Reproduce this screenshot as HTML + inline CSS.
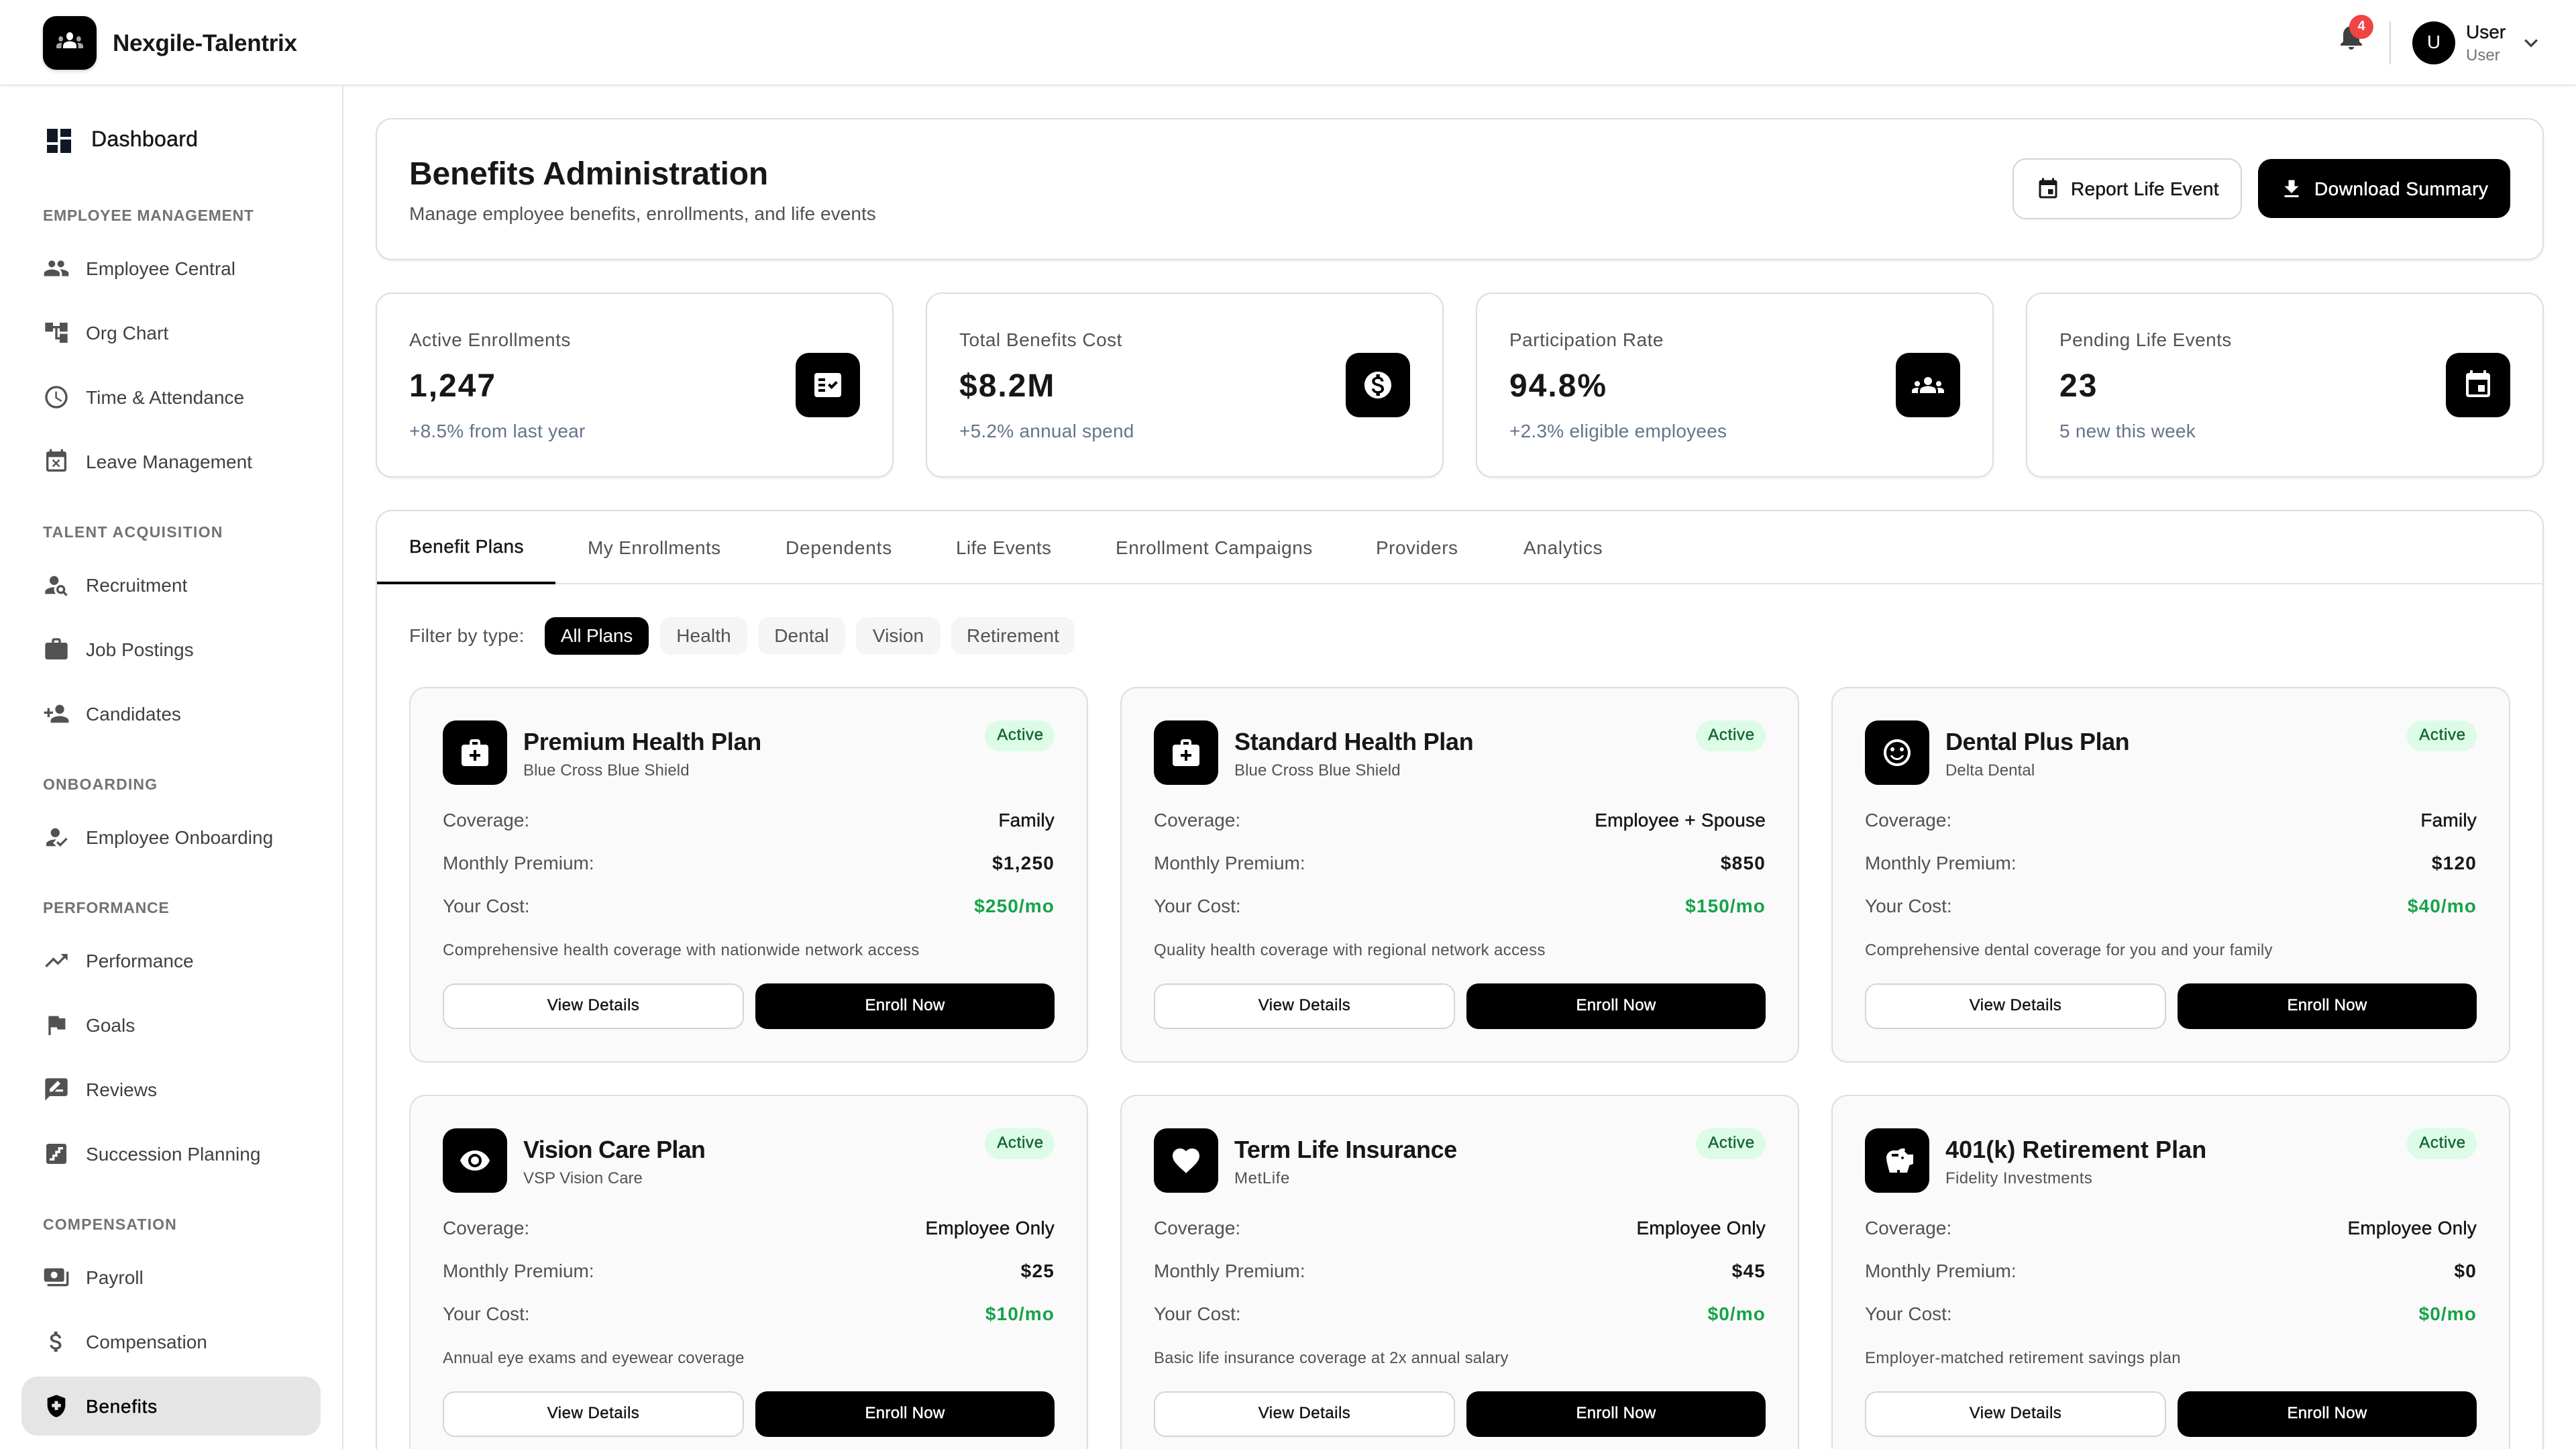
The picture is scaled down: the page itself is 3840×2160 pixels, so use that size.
<!DOCTYPE html>
<html lang="en"><head><meta charset="utf-8"><title>Benefits Administration</title>
<style>
*{box-sizing:border-box;margin:0;padding:0}
html,body{width:3840px;height:2160px;overflow:hidden;background:#fff;font-family:"Liberation Sans",sans-serif;color:#171717}
#root{position:relative;width:3840px;height:2160px;overflow:hidden;background:#fff}
.a,.t,.i{position:absolute}
.t{white-space:nowrap;line-height:40px;height:40px}
.i{fill:currentColor;display:block}
.m{-webkit-text-stroke:.45px currentColor}
.nav{font-size:28px;color:#404040;left:128px;letter-spacing:.03px;margin-top:2px}
.ni{width:40px;height:40px;left:64px;color:#525252}
.sec{font-size:23px;font-weight:700;color:#737373;left:64px}
.card{position:absolute;background:#fff;border:2px solid #dedede;border-radius:24px;box-shadow:0 2px 4px rgba(0,0,0,.05)}
.stat{top:436px;width:772px;height:276px}
.stat .t{left:48px}
.sl{font-size:28px;color:#525252;top:49px;letter-spacing:.5px}
.sv{font-size:48px;font-weight:700;top:118px;height:40px;letter-spacing:2px}
.ss{font-size:28px;color:#64748b;top:185px;letter-spacing:.25px}
.tile{position:absolute;width:96px;height:96px;border-radius:20px;background:#000;color:#fff}
.tile svg{position:absolute;left:24px;top:24px;width:48px;height:48px;fill:#fff}
.tab{font-size:28px;color:#525252;top:797px}
.chip{position:absolute;top:920px;height:56px;border-radius:16px;background:#f5f5f5;color:#525252;font-size:28px;line-height:56px;text-align:center;letter-spacing:.1px}
.plan{width:1012px;height:560px;background:#fafafa;box-shadow:none}
.plan .t{left:168px}
.pn{font-size:36px;font-weight:700;top:60px;letter-spacing:-.3px}
.pp{font-size:24px;color:#525252;top:103px;letter-spacing:.1px}
.bd{position:absolute;left:856px;top:48px;width:104px;height:46px;border-radius:23px;background:#dcfce7;color:#166534;font-size:24px;line-height:44px;text-align:center;letter-spacing:.7px;padding-left:2px}
.plan .r{left:48px;font-size:28px;color:#525252}
.plan .v{left:auto;right:48px;font-size:28px;letter-spacing:.2px}
.r1{top:177px}.r2{top:241px}.r3{top:305px}
.plan .b{font-weight:700;letter-spacing:1.2px}
.plan .g{font-weight:700;color:#16a34a;letter-spacing:1.1px}
.plan .d{left:48px;font-size:24px;color:#525252;top:371px;letter-spacing:.37px}
.vb,.eb{position:absolute;top:440px;height:68px;border-radius:18px;font-size:24px;text-align:center;letter-spacing:.5px}
.vb{left:48px;width:449px;background:#fff;border:2px solid #d4d4d4;line-height:62px;color:#171717}
.eb{left:514px;width:446px;background:#000;color:#fff;line-height:66px;letter-spacing:.3px}
</style></head>
<body>
<svg width="0" height="0" style="position:absolute"><defs>
<symbol id="dash" viewBox="0 0 24 24"><path d="M3 13h8V3H3v10zm0 8h8v-6H3v6zm10 0h8V11h-8v10zm0-18v6h8V3h-8z"/></symbol>
<symbol id="people" viewBox="0 0 24 24"><path d="M16 11c1.66 0 2.99-1.34 2.99-3S17.66 5 16 5c-1.66 0-3 1.34-3 3s1.34 3 3 3zm-8 0c1.66 0 2.99-1.34 2.99-3S9.66 5 8 5C6.34 5 5 6.34 5 8s1.34 3 3 3zm0 2c-2.33 0-7 1.17-7 3.5V19h14v-2.5c0-2.33-4.67-3.5-7-3.5zm8 0c-.29 0-.62.02-.97.05 1.16.84 1.97 1.97 1.97 3.45V19h6v-2.5c0-2.33-4.67-3.5-7-3.5z"/></symbol>
<symbol id="tree" viewBox="0 0 24 24"><path d="M22 11V3h-7v3H9V3H2v8h7V8h2v10h4v3h7v-8h-7v3h-2V8h2v3z"/></symbol>
<symbol id="clock" viewBox="0 0 24 24"><path d="M11.99 2C6.47 2 2 6.48 2 12s4.47 10 9.99 10C17.52 22 22 17.52 22 12S17.52 2 11.99 2zM12 20c-4.42 0-8-3.58-8-8s3.58-8 8-8 8 3.58 8 8-3.58 8-8 8zm.5-13H11v6l5.25 3.15.75-1.23-4.5-2.67z"/></symbol>
<symbol id="busy" viewBox="0 0 24 24"><path d="M9.31 17l2.44-2.44L14.19 17l1.06-1.06-2.44-2.44 2.44-2.44L14.19 10l-2.44 2.44L9.31 10l-1.06 1.06 2.44 2.44-2.44 2.44L9.31 17zM19 3h-1V1h-2v2H8V1H6v2H5c-1.11 0-1.99.9-1.99 2L3 19c0 1.1.89 2 2 2h14c1.1 0 2-.9 2-2V5c0-1.1-.9-2-2-2zm0 16H5V8h14v11z"/></symbol>
<symbol id="psearch" viewBox="0 0 24 24"><circle cx="10" cy="8" r="4"/><path d="M10.35 14.01C7.62 13.91 2 15.27 2 18v2h9.54c-2.47-2.76-1.23-5.89-1.19-5.99zM19.43 18.02c.36-.59.57-1.28.57-2.02 0-2.21-1.79-4-4-4s-4 1.79-4 4 1.79 4 4 4c.74 0 1.43-.22 2.02-.57L20.59 22 22 20.59c-1.5-1.5-.79-.8-2.57-2.57zM16 18c-1.1 0-2-.9-2-2s.9-2 2-2 2 .9 2 2-.9 2-2 2z"/></symbol>
<symbol id="work" viewBox="0 0 24 24"><path d="M20 6h-4V4c0-1.11-.89-2-2-2h-4c-1.11 0-2 .89-2 2v2H4c-1.11 0-1.99.89-1.99 2L2 19c0 1.11.89 2 2 2h16c1.11 0 2-.89 2-2V8c0-1.11-.89-2-2-2zm-6 0h-4V4h4v2z"/></symbol>
<symbol id="padd" viewBox="0 0 24 24"><path d="M15 12c2.21 0 4-1.79 4-4s-1.79-4-4-4-4 1.79-4 4 1.79 4 4 4zm-9-2V7H4v3H1v2h3v3h2v-3h3v-2H6zm9 4c-2.67 0-8 1.34-8 4v2h16v-2c0-2.66-5.33-4-8-4z"/></symbol>
<symbol id="reg" viewBox="0 0 24 24"><path d="M9 17l3-2.94c-.39-.04-.68-.06-1-.06-2.67 0-8 1.34-8 4v2h9l-3-3zm2-5c2.21 0 4-1.79 4-4s-1.79-4-4-4-4 1.79-4 4 1.79 4 4 4zm4.47 8.5L12 17l1.4-1.41 2.07 2.08 5.13-5.17 1.4 1.41z"/></symbol>
<symbol id="trend" viewBox="0 0 24 24"><path d="M16 6l2.29 2.29-4.88 4.88-4-4L2 16.59 3.41 18l6-6 4 4 6.3-6.29L22 12V6z"/></symbol>
<symbol id="flag" viewBox="0 0 24 24"><path d="M14.4 6L14 4H5v17h2v-7h5.6l.4 2h7V6z"/></symbol>
<symbol id="review" viewBox="0 0 24 24"><path d="M20 2H4c-1.1 0-1.99.9-1.99 2L2 22l4-4h14c1.1 0 2-.9 2-2V4c0-1.1-.9-2-2-2zM6 14v-2.47l6.88-6.88c.2-.2.51-.2.71 0l1.77 1.77c.2.2.2.51 0 .71L8.47 14H6zm12 0h-7.5l2-2H18v2z"/></symbol>
<symbol id="stairs" viewBox="0 0 24 24"><path d="M19 3H5c-1.1 0-2 .9-2 2v14c0 1.1.9 2 2 2h14c1.1 0 2-.9 2-2V5c0-1.1-.9-2-2-2zm-1 5h-2.42v3.33H13v3.33h-2.58V18H6v-2h2.42v-3.33H11V9.33h2.58V6H18v2z"/></symbol>
<symbol id="pay" viewBox="0 0 24 24"><path d="M19 14V6c0-1.1-.9-2-2-2H3c-1.1 0-2 .9-2 2v8c0 1.1.9 2 2 2h14c1.1 0 2-.9 2-2zm-9-1c-1.66 0-3-1.34-3-3s1.34-3 3-3 3 1.34 3 3-1.34 3-3 3zm13-6v11c0 1.1-.9 2-2 2H4v-2h17V7h2z"/></symbol>
<symbol id="money" viewBox="0 0 24 24"><path d="M11.8 10.9c-2.27-.59-3-1.2-3-2.15 0-1.09 1.01-1.85 2.7-1.85 1.78 0 2.44.85 2.5 2.1h2.21c-.07-1.72-1.12-3.3-3.21-3.81V3h-3v2.16c-1.94.42-3.5 1.68-3.5 3.61 0 2.31 1.91 3.46 4.7 4.13 2.5.6 3 1.48 3 2.41 0 .69-.49 1.79-2.7 1.79-2.06 0-2.87-.92-2.98-2.1h-2.2c.12 2.19 1.76 3.42 3.68 3.83V21h3v-2.15c1.95-.37 3.5-1.5 3.5-3.55 0-2.84-2.43-3.81-4.7-4.4z"/></symbol>
<symbol id="shield" viewBox="0 0 24 24"><path fill-rule="evenodd" d="M10.5 13H8v-3h2.5V7.5h3V10H16v3h-2.5v2.5h-3V13zM12 2 4 5v6.09c0 5.05 3.41 9.76 8 10.91 4.59-1.15 8-5.86 8-10.91V5l-8-3z"/></symbol>
<symbol id="event" viewBox="0 0 24 24"><path d="M17 12h-5v5h5v-5zM16 1v2H8V1H6v2H5c-1.11 0-1.99.9-1.99 2L3 19c0 1.1.89 2 2 2h14c1.1 0 2-.9 2-2V5c0-1.1-.9-2-2-2h-1V1h-2zm3 18H5V8h14v11z"/></symbol>
<symbol id="dl" viewBox="0 0 24 24"><path d="M19 9h-4V3H9v6H5l7 7 7-7zM5 18v2h14v-2H5z"/></symbol>
<symbol id="groups" viewBox="0 0 24 24"><path d="M12 12.75c1.63 0 3.07.39 4.24.9 1.08.48 1.76 1.56 1.76 2.73V18H6v-1.61c0-1.18.68-2.26 1.76-2.73 1.17-.52 2.61-.91 4.24-.91zM4 13c1.1 0 2-.9 2-2s-.9-2-2-2-2 .9-2 2 .9 2 2 2zm1.13 1.1c-.37-.06-.74-.1-1.13-.1-.99 0-1.93.21-2.78.58C.48 14.9 0 15.62 0 16.43V18h4.5v-1.61c0-.83.23-1.61.63-2.29zM20 13c1.1 0 2-.9 2-2s-.9-2-2-2-2 .9-2 2 .9 2 2 2zm4 3.43c0-.81-.48-1.53-1.22-1.85-.85-.37-1.79-.58-2.78-.58-.39 0-.76.04-1.13.1.4.68.63 1.46.63 2.29V18H24v-1.57zM12 6c1.66 0 3 1.34 3 3s-1.34 3-3 3-3-1.34-3-3 1.34-3 3-3z"/></symbol>
<symbol id="check" viewBox="0 0 24 24"><path fill-rule="evenodd" d="M20 3H4c-1.1 0-2 .9-2 2v14c0 1.1.9 2 2 2h16c1.1 0 2-.9 2-2V5c0-1.1-.9-2-2-2zM10 17H5v-2h5v2zm0-4H5v-2h5v2zm0-4H5V7h5v2zm4.82 6L12 12.16l1.41-1.41 1.41 1.42L17.99 9l1.42 1.42L14.82 15z"/></symbol>
<symbol id="coin" viewBox="0 0 24 24"><path fill-rule="evenodd" d="M12 2C6.48 2 2 6.48 2 12s4.48 10 10 10 10-4.48 10-10S17.52 2 12 2zm1.41 16.09V20h-2.67v-1.93c-1.71-.36-3.16-1.46-3.27-3.4h1.96c.1 1.05.82 1.87 2.65 1.87 1.96 0 2.4-.98 2.4-1.59 0-.83-.44-1.61-2.67-2.14-2.48-.6-4.18-1.62-4.18-3.67 0-1.72 1.39-2.84 3.11-3.21V4h2.67v1.95c1.86.45 2.79 1.86 2.85 3.39H14.3c-.05-1.11-.64-1.87-2.22-1.87-1.5 0-2.4.68-2.4 1.64 0 .84.65 1.39 2.67 1.91s4.18 1.39 4.18 3.91c-.01 1.83-1.38 2.83-3.12 3.16z"/></symbol>
<symbol id="med" viewBox="0 0 24 24"><path fill-rule="evenodd" d="M20 6h-4V4c0-1.1-.9-2-2-2h-4c-1.1 0-2 .9-2 2v2H4c-1.1 0-2 .9-2 2v12c0 1.1.9 2 2 2h16c1.1 0 2-.9 2-2V8c0-1.1-.9-2-2-2zM10 4h4v2h-4V4zm6 11h-3v3h-2v-3H8v-2h3v-3h2v3h3v2z"/></symbol>
<symbol id="smile" viewBox="0 0 24 24"><circle cx="15.5" cy="9.5" r="1.5"/><circle cx="8.5" cy="9.5" r="1.5"/><path d="M12 16c-1.48 0-2.75-.81-3.45-2H6.88c.8 2.05 2.79 3.5 5.12 3.5s4.32-1.45 5.12-3.5h-1.67c-.7 1.19-1.97 2-3.45 2zm-.01-14C6.47 2 2 6.48 2 12s4.47 10 9.99 10C17.52 22 22 17.52 22 12S17.52 2 11.99 2zM12 20c-4.42 0-8-3.58-8-8s3.58-8 8-8 8 3.58 8 8-3.58 8-8 8z"/></symbol>
<symbol id="eye" viewBox="0 0 24 24"><path d="M12 4.5C7 4.5 2.73 7.61 1 12c1.73 4.39 6 7.5 11 7.5s9.27-3.11 11-7.5c-1.73-4.39-6-7.5-11-7.5zM12 17c-2.76 0-5-2.24-5-5s2.24-5 5-5 5 2.24 5 5-2.24 5-5 5zm0-8c-1.66 0-3 1.34-3 3s1.34 3 3 3 3-1.34 3-3-1.34-3-3-3z"/></symbol>
<symbol id="heart" viewBox="0 0 24 24"><path d="M12 21.35l-1.45-1.32C5.4 15.36 2 12.28 2 8.5 2 5.42 4.42 3 7.5 3c1.74 0 3.41.81 4.5 2.09C13.09 3.81 14.76 3 16.5 3 19.58 3 22 5.42 22 8.5c0 3.78-3.4 6.86-8.55 11.54L12 21.35z"/></symbol>
<symbol id="pig" viewBox="0 0 24 24"><path fill-rule="evenodd" d="M19.83 7.5l-2.27-2.27c.07-.42.18-.81.32-1.15.11-.26.04-.56-.16-.76-.36-.36-1-.32-1.49-.32-1.31 0-2.59.55-3.49 1.5H9.5C6.46 4.5 4 6.96 4 10c0 3.04 2.5 11 2.5 11H12v-2h2v2h5.5l1.68-5.59 2.82-.94V7.5h-2.17zM13 9H8V7h5v2zm3 2c-.55 0-1-.45-1-1s.45-1 1-1 1 .45 1 1-.45 1-1 1z"/></symbol>
</defs></svg>

<div id="root">
<!-- top header -->
<div class="a" style="left:0;top:0;width:3840px;height:128px;background:#fff;border-bottom:2px solid #e5e5e5;box-shadow:0 2px 4px rgba(0,0,0,.03)"></div>
<div class="a" style="left:64px;top:24px;width:80px;height:80px;border-radius:20px;background:#000;box-shadow:0 2px 6px rgba(0,0,0,.18)"></div>
<svg class="i" style="left:84px;top:36px;width:40px;height:48px;fill:#fff" viewBox="0 0 24 24" preserveAspectRatio="none"><path opacity=".65" d="M4 13c1.1 0 2-.9 2-2s-.9-2-2-2-2 .9-2 2 .9 2 2 2zm1.13 1.1c-.37-.06-.74-.1-1.13-.1-.99 0-1.93.21-2.78.58C.48 14.9 0 15.62 0 16.43V18h4.5v-1.61c0-.83.23-1.61.63-2.29zM20 13c1.1 0 2-.9 2-2s-.9-2-2-2-2 .9-2 2 .9 2 2 2zm4 3.43c0-.81-.48-1.53-1.22-1.85-.85-.37-1.79-.58-2.78-.58-.39 0-.76.04-1.13.1.4.68.63 1.46.63 2.29V18H24v-1.57z"/><path d="M12 12.75c1.63 0 3.07.39 4.24.9 1.08.48 1.76 1.56 1.76 2.73V18H6v-1.61c0-1.18.68-2.26 1.76-2.73 1.17-.52 2.61-.91 4.24-.91zM12 6c1.66 0 3 1.34 3 3s-1.34 3-3 3-3-1.34-3-3 1.34-3 3-3z"/></svg>
<div class="t" style="left:168px;top:45px;font-size:35px;font-weight:700;letter-spacing:-.28px">Nexgile-Talentrix</div>

<svg class="i" style="left:3481px;top:30px;width:48px;height:48px;color:#404040" viewBox="0 0 24 24"><path d="M12 22c1.1 0 2-.9 2-2h-4c0 1.1.89 2 2 2zm6-6v-5c0-3.07-1.64-5.64-4.5-6.32V4c0-.83-.67-1.5-1.5-1.5s-1.5.67-1.5 1.5v.68C7.63 5.36 6 7.92 6 11v5l-2 2v1h16v-1l-2-2z"/></svg>
<div class="a" style="left:3502px;top:22px;width:36px;height:36px;border-radius:50%;background:#ef4444;color:#fff;font-size:20px;font-weight:700;line-height:34px;text-align:center">4</div>
<div class="a" style="left:3562px;top:32px;width:2px;height:64px;background:#d4d4d4"></div>
<div class="a" style="left:3596px;top:32px;width:64px;height:64px;border-radius:50%;background:#000;color:#fff;font-size:28px;line-height:62px;text-align:center">U</div>
<div class="t m" style="left:3676px;top:28px;font-size:28px">User</div>
<div class="t" style="left:3676px;top:63px;font-size:24px;color:#737373">User</div>
<svg class="i" style="left:3753px;top:44px;width:40px;height:40px;color:#404040" viewBox="0 0 24 24"><path d="M16.59 8.59L12 13.17 7.41 8.59 6 10l6 6 6-6z"/></svg>

<!-- sidebar -->
<div class="a" style="left:510px;top:128px;width:2px;height:2032px;background:#e5e5e5"></div>
<svg class="i" style="left:64px;top:186px;width:48px;height:48px;color:#101828"><use href="#dash"/></svg>
<div class="t m" style="left:136px;top:187px;font-size:32px;letter-spacing:.3px">Dashboard</div>

<div class="t sec" style="top:301px;letter-spacing:.68px">EMPLOYEE MANAGEMENT</div>
<svg class="i ni" style="top:380px"><use href="#people"/></svg><div class="t nav" style="top:379px">Employee Central</div>
<svg class="i ni" style="top:476px"><use href="#tree"/></svg><div class="t nav" style="top:475px">Org Chart</div>
<svg class="i ni" style="top:572px"><use href="#clock"/></svg><div class="t nav" style="top:571px">Time &amp; Attendance</div>
<svg class="i ni" style="top:668px"><use href="#busy"/></svg><div class="t nav" style="top:667px">Leave Management</div>

<div class="t sec" style="top:773px;letter-spacing:1.3px">TALENT ACQUISITION</div>
<svg class="i ni" style="top:852px"><use href="#psearch"/></svg><div class="t nav" style="top:851px">Recruitment</div>
<svg class="i ni" style="top:948px"><use href="#work"/></svg><div class="t nav" style="top:947px">Job Postings</div>
<svg class="i ni" style="top:1044px"><use href="#padd"/></svg><div class="t nav" style="top:1043px">Candidates</div>

<div class="t sec" style="top:1149px;letter-spacing:1.15px">ONBOARDING</div>
<svg class="i ni" style="top:1228px"><use href="#reg"/></svg><div class="t nav" style="top:1227px">Employee Onboarding</div>

<div class="t sec" style="top:1333px;letter-spacing:.75px">PERFORMANCE</div>
<svg class="i ni" style="top:1412px"><use href="#trend"/></svg><div class="t nav" style="top:1411px">Performance</div>
<svg class="i ni" style="top:1508px"><use href="#flag"/></svg><div class="t nav" style="top:1507px">Goals</div>
<svg class="i ni" style="top:1604px"><use href="#review"/></svg><div class="t nav" style="top:1603px">Reviews</div>
<svg class="i ni" style="top:1700px"><use href="#stairs"/></svg><div class="t nav" style="top:1699px">Succession Planning</div>

<div class="t sec" style="top:1805px;letter-spacing:1.15px">COMPENSATION</div>
<svg class="i ni" style="top:1884px"><use href="#pay"/></svg><div class="t nav" style="top:1883px">Payroll</div>
<svg class="i ni" style="top:1980px"><use href="#money"/></svg><div class="t nav" style="top:1979px">Compensation</div>
<div class="a" style="left:32px;top:2052px;width:446px;height:88px;border-radius:24px;background:#e5e5e5"></div>
<svg class="i ni" style="top:2076px;color:#000"><use href="#shield"/></svg><div class="t nav m" style="top:2075px;color:#000;letter-spacing:.7px">Benefits</div>

<!-- page header card -->
<div class="card" style="left:560px;top:176px;width:3232px;height:212px"></div>
<div class="t" style="left:610px;top:240px;font-size:48px;font-weight:700;letter-spacing:-.2px">Benefits Administration</div>
<div class="t" style="left:610px;top:299px;font-size:28px;color:#525252;letter-spacing:.06px">Manage employee benefits, enrollments, and life events</div>
<div class="a" style="left:3000px;top:236px;width:342px;height:91px;border:2px solid #d4d4d4;border-radius:20px;background:#fff"></div>
<svg class="i" style="left:3035px;top:264px;width:36px;height:36px"><use href="#event"/></svg>
<div class="t m" style="left:3087px;top:262px;font-size:28px;letter-spacing:.26px">Report Life Event</div>
<div class="a" style="left:3366px;top:237px;width:376px;height:88px;border-radius:20px;background:#000"></div>
<svg class="i" style="left:3398px;top:264px;width:36px;height:36px;color:#fff"><use href="#dl"/></svg>
<div class="t m" style="left:3450px;top:262px;font-size:28px;color:#fff;letter-spacing:.45px">Download Summary</div>

<!-- stat cards -->
<div class="card stat" style="left:560px">
  <div class="t sl">Active Enrollments</div><div class="t sv">1,247</div><div class="t ss">+8.5% from last year</div>
  <div class="tile" style="left:624px;top:88px"><svg><use href="#check"/></svg></div>
</div>
<div class="card stat" style="left:1380px">
  <div class="t sl">Total Benefits Cost</div><div class="t sv">$8.2M</div><div class="t ss">+5.2% annual spend</div>
  <div class="tile" style="left:624px;top:88px"><svg><use href="#coin"/></svg></div>
</div>
<div class="card stat" style="left:2200px">
  <div class="t sl">Participation Rate</div><div class="t sv">94.8%</div><div class="t ss">+2.3% eligible employees</div>
  <div class="tile" style="left:624px;top:88px"><svg><use href="#groups"/></svg></div>
</div>
<div class="card stat" style="left:3020px">
  <div class="t sl" style="letter-spacing:.4px">Pending Life Events</div><div class="t sv">23</div><div class="t ss">5 new this week</div>
  <div class="tile" style="left:624px;top:88px"><svg><use href="#event"/></svg></div>
</div>

<!-- tab container -->
<div class="card" style="left:560px;top:760px;width:3232px;height:1500px"></div>
<div class="a" style="left:562px;top:869px;width:3228px;height:2px;background:#e5e5e5"></div>
<div class="a" style="left:562px;top:867px;width:266px;height:4px;background:#000"></div>
<div class="t tab m" style="left:610px;top:795px;color:#171717;letter-spacing:.46px">Benefit Plans</div>
<div class="t tab" style="left:876px;letter-spacing:.4px">My Enrollments</div>
<div class="t tab" style="left:1171px;letter-spacing:.8px">Dependents</div>
<div class="t tab" style="left:1425px;letter-spacing:.35px">Life Events</div>
<div class="t tab" style="left:1663px;letter-spacing:.53px">Enrollment Campaigns</div>
<div class="t tab" style="left:2051px;letter-spacing:.47px">Providers</div>
<div class="t tab" style="left:2271px;letter-spacing:.7px">Analytics</div>

<div class="t" style="left:610px;top:928px;font-size:28px;color:#525252;letter-spacing:.24px">Filter by type:</div>
<div class="chip" style="left:812px;width:155px;background:#000;color:#fff;letter-spacing:-.2px">All Plans</div>
<div class="chip" style="left:984px;width:130px">Health</div>
<div class="chip" style="left:1130px;width:130px">Dental</div>
<div class="chip" style="left:1276px;width:126px">Vision</div>
<div class="chip" style="left:1418px;width:184px">Retirement</div>

<!-- plans -->
<div class="card plan" style="left:610px;top:1024px">
  <div class="tile" style="left:48px;top:48px"><svg><use href="#med"/></svg></div>
  <div class="t pn" style="letter-spacing:-.27px">Premium Health Plan</div><div class="t pp">Blue Cross Blue Shield</div><div class="bd m">Active</div>
  <div class="t r r1">Coverage:</div><div class="t v m r1">Family</div>
  <div class="t r r2">Monthly Premium:</div><div class="t v b r2">$1,250</div>
  <div class="t r r3">Your Cost:</div><div class="t v g r3">$250/mo</div>
  <div class="t d">Comprehensive health coverage with nationwide network access</div>
  <div class="vb m">View Details</div><div class="eb m">Enroll Now</div>
</div>
<div class="card plan" style="left:1670px;top:1024px">
  <div class="tile" style="left:48px;top:48px"><svg><use href="#med"/></svg></div>
  <div class="t pn" style="letter-spacing:-.28px">Standard Health Plan</div><div class="t pp">Blue Cross Blue Shield</div><div class="bd m">Active</div>
  <div class="t r r1">Coverage:</div><div class="t v m r1">Employee + Spouse</div>
  <div class="t r r2">Monthly Premium:</div><div class="t v b r2">$850</div>
  <div class="t r r3">Your Cost:</div><div class="t v g r3">$150/mo</div>
  <div class="t d" style="letter-spacing:.35px">Quality health coverage with regional network access</div>
  <div class="vb m">View Details</div><div class="eb m">Enroll Now</div>
</div>
<div class="card plan" style="left:2730px;top:1024px">
  <div class="tile" style="left:48px;top:48px"><svg><use href="#smile"/></svg></div>
  <div class="t pn" style="letter-spacing:-.5px">Dental Plus Plan</div><div class="t pp">Delta Dental</div><div class="bd m">Active</div>
  <div class="t r r1">Coverage:</div><div class="t v m r1">Family</div>
  <div class="t r r2">Monthly Premium:</div><div class="t v b r2">$120</div>
  <div class="t r r3">Your Cost:</div><div class="t v g r3">$40/mo</div>
  <div class="t d" style="letter-spacing:.24px">Comprehensive dental coverage for you and your family</div>
  <div class="vb m">View Details</div><div class="eb m">Enroll Now</div>
</div>
<div class="card plan" style="left:610px;top:1632px">
  <div class="tile" style="left:48px;top:48px"><svg><use href="#eye"/></svg></div>
  <div class="t pn" style="letter-spacing:-.77px">Vision Care Plan</div><div class="t pp" style="letter-spacing:.0px">VSP Vision Care</div><div class="bd m">Active</div>
  <div class="t r r1">Coverage:</div><div class="t v m r1">Employee Only</div>
  <div class="t r r2">Monthly Premium:</div><div class="t v b r2">$25</div>
  <div class="t r r3">Your Cost:</div><div class="t v g r3">$10/mo</div>
  <div class="t d" style="letter-spacing:.07px">Annual eye exams and eyewear coverage</div>
  <div class="vb m">View Details</div><div class="eb m">Enroll Now</div>
</div>
<div class="card plan" style="left:1670px;top:1632px">
  <div class="tile" style="left:48px;top:48px"><svg><use href="#heart"/></svg></div>
  <div class="t pn" style="letter-spacing:-.4px">Term Life Insurance</div><div class="t pp" style="letter-spacing:.6px">MetLife</div><div class="bd m">Active</div>
  <div class="t r r1">Coverage:</div><div class="t v m r1">Employee Only</div>
  <div class="t r r2">Monthly Premium:</div><div class="t v b r2">$45</div>
  <div class="t r r3">Your Cost:</div><div class="t v g r3">$0/mo</div>
  <div class="t d" style="letter-spacing:.17px">Basic life insurance coverage at 2x annual salary</div>
  <div class="vb m">View Details</div><div class="eb m">Enroll Now</div>
</div>
<div class="card plan" style="left:2730px;top:1632px">
  <div class="tile" style="left:48px;top:48px"><svg><use href="#pig"/></svg></div>
  <div class="t pn" style="letter-spacing:.05px">401(k) Retirement Plan</div><div class="t pp" style="letter-spacing:.35px">Fidelity Investments</div><div class="bd m">Active</div>
  <div class="t r r1">Coverage:</div><div class="t v m r1">Employee Only</div>
  <div class="t r r2">Monthly Premium:</div><div class="t v b r2">$0</div>
  <div class="t r r3">Your Cost:</div><div class="t v g r3">$0/mo</div>
  <div class="t d">Employer-matched retirement savings plan</div>
  <div class="vb m">View Details</div><div class="eb m">Enroll Now</div>
</div>
</div>
</body></html>
